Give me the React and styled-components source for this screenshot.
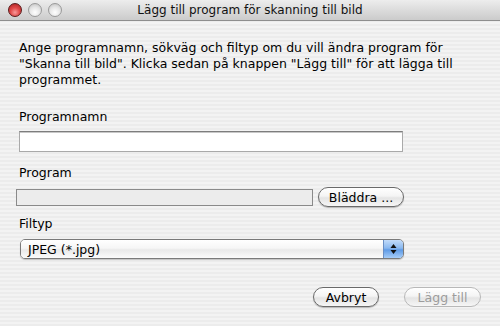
import React from "react";
import styled, { createGlobalStyle } from "styled-components";

const Global = createGlobalStyle`
  html, body {
    margin: 0;
    padding: 0;
  }
  body {
    font-family: "DejaVu Sans", "Liberation Sans", sans-serif;
    color: #000;
  }
`;

const Window = styled.div`
  width: 500px;
  height: 326px;
  display: flex;
  flex-direction: column;
  overflow: hidden;
  background: repeating-linear-gradient(
    to bottom,
    #ececec 0px,
    #ececec 2px,
    #f3f3f3 2px,
    #f3f3f3 4px
  );
`;

const TitleBar = styled.div`
  height: 20px;
  flex: none;
  display: flex;
  align-items: center;
  position: relative;
  padding-left: 8px;
  border-bottom: 1px solid #8e8e8e;
  background: linear-gradient(to bottom, #ededed 0%, #dadada 55%, #cbcbcb 100%);
`;

const Lights = styled.div`
  display: flex;
  gap: 6px;
`;

const Light = styled.div`
  width: 14px;
  height: 14px;
  border-radius: 50%;
  box-sizing: border-box;
  border: 1px solid ${(p) => (p.$red ? "#5a1a1a" : "#9a9a9a")};
  background: ${(p) =>
    p.$red
      ? "radial-gradient(circle at 50% 70%, #f79a9a 0%, #e04848 45%, #a81e1e 100%)"
      : "radial-gradient(circle at 50% 70%, #ffffff 0%, #e6e6e6 50%, #bdbdbd 100%)"};
`;

const Title = styled.div`
  position: absolute;
  left: 0;
  right: 0;
  text-align: center;
  font-size: 12px;
  color: #111;
  pointer-events: none;
`;

const Content = styled.div`
  padding: 0 19px;
  display: flex;
  flex-direction: column;
`;

const Intro = styled.p`
  margin: 19px 0 0;
  font-size: 12.5px;
  line-height: 16px;
`;

const Label = styled.div`
  font-size: 12.5px;
  line-height: 16px;
  margin-top: ${(p) => p.$top}px;
`;

const TextInput = styled.div`
  margin-top: 6px;
  width: 384px;
  height: 21px;
  box-sizing: border-box;
  background: #fff;
  border: 1px solid #a9a9a9;
  border-top-color: #7d7d7d;
  box-shadow: inset 0 1px 0 #c8c8c8;
`;

const Row = styled.div`
  margin-top: 6px;
  margin-left: -3px;
  display: flex;
  align-items: center;
  gap: 5px;
`;

const PathField = styled.div`
  width: 297px;
  height: 17px;
  box-sizing: border-box;
  background: #ececec;
  border: 1px solid #8a8a8a;
`;

const Pill = styled.div`
  width: ${(p) => p.$w}px;
  height: 20px;
  box-sizing: border-box;
  border-radius: 10px;
  border: 1px solid ${(p) => (p.$disabled ? "#b8b8b8" : "#6a6a6a")};
  background: linear-gradient(
    to bottom,
    #ffffff 0%,
    #f4f4f4 45%,
    #e4e4e4 55%,
    #f6f6f6 100%
  );
  box-shadow: ${(p) => (p.$disabled ? "none" : "0 1px 1px rgba(0,0,0,0.25)")};
  display: flex;
  align-items: center;
  justify-content: center;
  font-size: 12.5px;
  color: ${(p) => (p.$disabled ? "#9c9c9c" : "#000")};
`;

const Popup = styled.div`
  margin-top: 7px;
  margin-left: 1px;
  width: 384px;
  height: 20px;
  box-sizing: border-box;
  display: flex;
  border: 1px solid #7a7a7a;
  border-radius: 5px;
  overflow: hidden;
  box-shadow: 0 1px 1px rgba(0, 0, 0, 0.2);
`;

const PopupText = styled.div`
  flex: 1;
  display: flex;
  align-items: center;
  padding-left: 7px;
  font-size: 12.5px;
  background: linear-gradient(
    to bottom,
    #ffffff 0%,
    #f6f6f6 45%,
    #e9e9e9 55%,
    #fbfbfb 100%
  );
`;

const PopupArrows = styled.div`
  width: 19px;
  display: flex;
  align-items: center;
  justify-content: center;
  border-left: 1px solid #6b8fc4;
  background: linear-gradient(
    to bottom,
    #c3dcfa 0%,
    #8ab8ef 45%,
    #5f9be6 55%,
    #a6cdf8 100%
  );
`;

const Footer = styled.div`
  margin-top: 28px;
  display: flex;
  justify-content: flex-end;
  gap: 25px;
`;

export default function App() {
  return (
    <>
      <Global />
      <Window>
        <TitleBar>
          <Lights>
            <Light $red />
            <Light />
            <Light />
          </Lights>
          <Title>Lägg till program för skanning till bild</Title>
        </TitleBar>
        <Content>
          <Intro>
            Ange programnamn, sökväg och filtyp om du vill ändra program för
            <br />
            "Skanna till bild". Klicka sedan på knappen "Lägg till" för att lägga till
            <br />
            programmet.
          </Intro>
          <Label $top={21}>Programnamn</Label>
          <TextInput />
          <Label $top={13}>Program</Label>
          <Row>
            <PathField />
            <Pill $w={86}>Bläddra ...</Pill>
          </Row>
          <Label $top={9}>Filtyp</Label>
          <Popup>
            <PopupText>JPEG (*.jpg)</PopupText>
            <PopupArrows>
              <svg width="7" height="12" viewBox="0 0 7 12">
                <path d="M3.5 1 L6.5 5 L0.5 5 Z" fill="#111" />
                <path d="M3.5 11 L6.5 7 L0.5 7 Z" fill="#111" />
              </svg>
            </PopupArrows>
          </Popup>
          <Footer>
            <Pill $w={66}>Avbryt</Pill>
            <Pill $w={77} $disabled>
              Lägg till
            </Pill>
          </Footer>
        </Content>
      </Window>
    </>
  );
}
